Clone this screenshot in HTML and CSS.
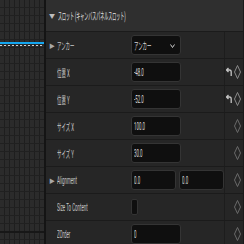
FILE: index.html
```html
<!DOCTYPE html>
<html lang="ja">
<head>
    <meta charset="UTF-8">
    <title>Details</title>
    <link rel="stylesheet" href="styles.css">
</head>
<body>
    <div id="designer">
        <div class="anchor-line"></div>
        <div class="anchor-dots"></div>
        <div class="canvas-edge"></div>
    </div>
    <div id="details">
        <div class="section-header">
            <span class="arrow">▼</span>
            <span class="sq title">スロット (キャンバスパネルスロット)</span>
        </div>

        <div class="row">
            <div class="label"><span class="expander">▶</span><span class="sq">アンカー</span></div>
            <div class="value">
                <div class="field combo">
                    <span class="sq">アンカー</span>
                    <svg class="chevron" width="5" height="4" viewBox="0 0 5 4"><path d="M0.5 0.5 L2.5 3.5 L4.5 0.5" fill="none" stroke="#c8c8c8" stroke-width="1"/></svg>
                </div>
            </div>
            <div class="extra"></div>
        </div>

        <div class="row">
            <div class="label"><span class="sq">位置 X</span></div>
            <div class="value"><div class="field"><span class="sq">-48.0</span></div></div>
            <div class="extra">
                <svg class="reset" width="6" height="10" viewBox="0 0 6 10"><path d="M2.5 1 L0.5 3 L2.5 5 M0.8 3 L3.5 3 Q5.2 3 5.2 5 L5.2 9" fill="none" stroke="#c4c4c4" stroke-width="1.3"/></svg>
                <svg class="key" width="7" height="14" viewBox="0 0 7 14"><path d="M3.5 0.5 L6.5 7 L3.5 13.5 L0.5 7 Z" fill="none" stroke="#8a8a8a" stroke-width="1"/></svg>
            </div>
        </div>

        <div class="row">
            <div class="label"><span class="sq">位置 Y</span></div>
            <div class="value"><div class="field"><span class="sq">-52.0</span></div></div>
            <div class="extra">
                <svg class="reset" width="6" height="10" viewBox="0 0 6 10"><path d="M2.5 1 L0.5 3 L2.5 5 M0.8 3 L3.5 3 Q5.2 3 5.2 5 L5.2 9" fill="none" stroke="#c4c4c4" stroke-width="1.3"/></svg>
                <svg class="key" width="7" height="14" viewBox="0 0 7 14"><path d="M3.5 0.5 L6.5 7 L3.5 13.5 L0.5 7 Z" fill="none" stroke="#8a8a8a" stroke-width="1"/></svg>
            </div>
        </div>

        <div class="row">
            <div class="label"><span class="sq">サイズ X</span></div>
            <div class="value"><div class="field"><span class="sq">100.0</span></div></div>
            <div class="extra">
                <svg class="key dim" width="7" height="14" viewBox="0 0 7 14"><path d="M3.5 0.5 L6.5 7 L3.5 13.5 L0.5 7 Z" fill="none" stroke="#6a6a6a" stroke-width="1"/></svg>
            </div>
        </div>

        <div class="row">
            <div class="label"><span class="sq">サイズ Y</span></div>
            <div class="value"><div class="field"><span class="sq">30.0</span></div></div>
            <div class="extra">
                <svg class="key dim" width="7" height="14" viewBox="0 0 7 14"><path d="M3.5 0.5 L6.5 7 L3.5 13.5 L0.5 7 Z" fill="none" stroke="#6a6a6a" stroke-width="1"/></svg>
            </div>
        </div>

        <div class="row">
            <div class="label"><span class="expander">▶</span><span class="sq">Alignment</span></div>
            <div class="value pair">
                <div class="field half"><span class="sq">0.0</span></div>
                <div class="field half"><span class="sq">0.0</span></div>
            </div>
            <div class="extra">
                <svg class="key dim" width="7" height="14" viewBox="0 0 7 14"><path d="M3.5 0.5 L6.5 7 L3.5 13.5 L0.5 7 Z" fill="none" stroke="#6a6a6a" stroke-width="1"/></svg>
            </div>
        </div>

        <div class="row">
            <div class="label"><span class="sq">Size To Content</span></div>
            <div class="value"><div class="check"></div></div>
            <div class="extra">
                <svg class="key dim" width="7" height="14" viewBox="0 0 7 14"><path d="M3.5 0.5 L6.5 7 L3.5 13.5 L0.5 7 Z" fill="none" stroke="#6a6a6a" stroke-width="1"/></svg>
            </div>
        </div>

        <div class="row">
            <div class="label"><span class="sq">ZOrder</span></div>
            <div class="value"><div class="field"><span class="sq">0</span></div></div>
            <div class="extra">
                <svg class="key dim" width="7" height="14" viewBox="0 0 7 14"><path d="M3.5 0.5 L6.5 7 L3.5 13.5 L0.5 7 Z" fill="none" stroke="#6a6a6a" stroke-width="1"/></svg>
            </div>
        </div>
    </div>
</body>
</html>
```

FILE: styles.css
```css
html, body {
    margin: 0;
    padding: 0;
}

body {
    width: 244px;
    height: 244px;
    overflow: hidden;
    display: flex;
    background-color: #242424;
    font-family: Roboto, "Noto Sans CJK JP", sans-serif;
    font-size: 10px;
    color: #c6c6c6;
}

/* designer canvas on the left */
#designer {
    position: relative;
    width: 44px;
    flex-shrink: 0;
    background-color: #2b2b2b;
    background-image:
        repeating-linear-gradient(to bottom, transparent 0, transparent 7px, #202020 7px, #202020 8px),
        repeating-linear-gradient(to right, transparent 0, transparent 4px, #1e1e1e 4px, #1e1e1e 5px);
    border-right: 2px solid #141414;
}

.anchor-line {
    position: absolute;
    left: 0;
    right: 0;
    top: 42px;
    height: 2px;
    background-color: #14a6f0;
}

.anchor-dots {
    position: absolute;
    left: 0;
    right: 0;
    top: 45px;
    height: 1px;
    background-image: repeating-linear-gradient(to right, #cfcfcf 0, #cfcfcf 2px, transparent 2px, transparent 4px);
}

.canvas-edge {
    position: absolute;
    left: 0;
    right: 0;
    top: 231px;
    height: 2px;
    background-color: #171717;
}

/* details panel */
#details {
    flex: 1;
    display: flex;
    flex-direction: column;
    background-color: #262626;
    border-right: 1px solid #1a1a1a;
    overflow: hidden;
}

.sq {
    display: inline-block;
    white-space: nowrap;
    transform: scaleX(0.44);
    transform-origin: left center;
}

.sq.title {
    transform: scaleX(0.4);
}

.section-header {
    height: 31px;
    flex-shrink: 0;
    display: flex;
    align-items: center;
    padding-left: 3px;
    background-color: #2f2f2f;
    border-bottom: 1px solid #1b1b1b;
    color: #e2e2e2;
    white-space: nowrap;
}

.arrow {
    font-size: 6px;
    color: #bdbdbd;
    margin-right: 3px;
}

.row {
    height: 26px;
    flex-shrink: 0;
    display: grid;
    grid-template-columns: 83px 95px 18px;
    border-bottom: 1px solid #1b1b1b;
}

.label {
    display: flex;
    align-items: center;
    padding-left: 11px;
    position: relative;
}

.expander {
    position: absolute;
    left: 3px;
    font-size: 6px;
    color: #a8a8a8;
}

.value {
    display: flex;
    align-items: center;
    padding-left: 2px;
}

.value.pair {
    gap: 3px;
}

.field {
    width: 50px;
    height: 20px;
    box-sizing: border-box;
    display: flex;
    align-items: center;
    padding-left: 2px;
    background-color: #0f0f0f;
    border: 1px solid #343434;
    border-radius: 3px;
    color: #dadada;
    overflow: hidden;
}

.field.half {
    width: 45px;
}

.combo {
    position: relative;
}

.chevron {
    position: absolute;
    right: 5px;
    top: 8px;
}

.check {
    width: 7px;
    height: 16px;
    box-sizing: border-box;
    background-color: #0f0f0f;
    border: 1px solid #333333;
    border-radius: 2px;
}

.extra {
    display: flex;
    align-items: center;
    justify-content: flex-end;
    gap: 2px;
    padding-right: 1px;
    border-left: 1px solid #1d1d1d;
}
```
